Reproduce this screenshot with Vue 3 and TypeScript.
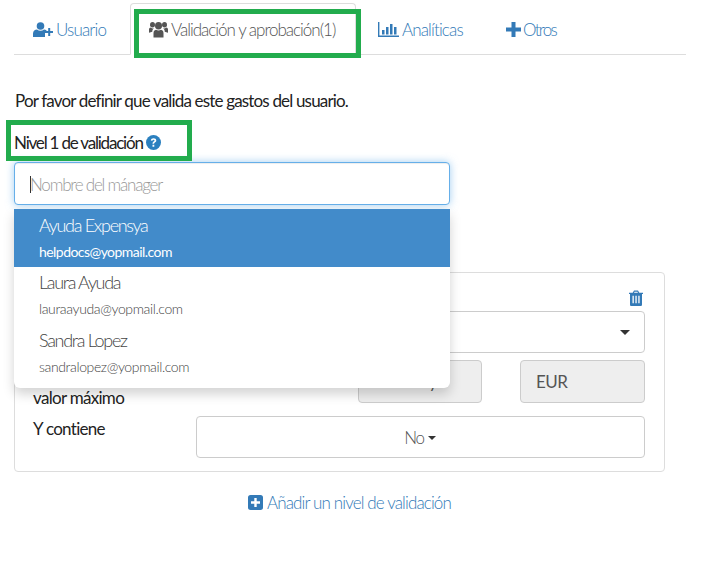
<script setup lang="ts">
const tabs = [
  { id: 'user', label: 'Usuario', active: false },
  { id: 'validation', label: 'Validación y aprobación(1)', active: true },
  { id: 'chart', label: 'Analíticas', active: false },
  { id: 'plus', label: 'Otros', active: false },
]
const people = [
  { name: 'Ayuda Expensya', mail: 'helpdocs@yopmail.com', active: true },
  { name: 'Laura Ayuda', mail: 'lauraayuda@yopmail.com', active: false },
  { name: 'Sandra Lopez', mail: 'sandralopez@yopmail.com', active: false },
]
</script>

<template>
  <div class="page">
    <ul class="tabs">
      <li v-for="t in tabs" :key="t.id" class="tab" :class="[t.id, { active: t.active }]">
        <svg v-if="t.id === 'user'" class="ico" width="20" height="15" viewBox="0 0 20 15">
          <circle cx="7.500" cy="4" r="3.800" fill="currentColor" />
          <path d="M0 15v-3.500C0 9 2 7.600 4 7.600c1 .8 2.200 1.200 3.500 1.200s2.500-.4 3.500-1.200c1 0 2 .4 2.700 1.100V11H12v4z" fill="currentColor" />
          <path d="M15.200 6h2v3h3v2h-3v3h-2v-3h-3V9h3z" fill="currentColor" />
        </svg>
        <svg v-else-if="t.id === 'validation'" class="ico" width="19" height="17" viewBox="0 0 19 16" preserveAspectRatio="none">
          <circle cx="9.500" cy="4.500" r="3.500" fill="currentColor" />
          <circle cx="3.500" cy="3.500" r="2.500" fill="currentColor" />
          <circle cx="15.500" cy="3.500" r="2.500" fill="currentColor" />
          <path d="M4.500 15.500v-4c0-2 1-3 2.500-3.300 1.500 1 3.500 1 5 0 1.500.3 2.500 1.300 2.500 3.300v4z" fill="currentColor" />
          <path d="M0 11V8c0-1 .8-1.800 1.800-1.800 1 .8 2 1 3 .7-1 .8-1.500 1.800-1.500 3.100zM19 11V8c0-1-.8-1.800-1.800-1.800-1 .8-2 1-3 .7 1 .8 1.500 1.800 1.500 3.100z" fill="currentColor" />
        </svg>
        <svg v-else-if="t.id === 'chart'" class="ico" width="21" height="15" viewBox="0 0 21 15">
          <path d="M0 0h1.400v13.500H21V15H0z" fill="currentColor" />
          <path d="M4 8h2.500v4.500H4zM8 5h2.500v7.500H8zM12 2h2.500v10.500H12zM16 5h2.500v7.500H16z" fill="currentColor" />
        </svg>
        <svg v-else class="ico" width="15" height="15" viewBox="0 0 15 15">
          <path d="M5.500 0h4v5.500H15v4H9.500V15h-4V9.500H0v-4h5.500z" fill="currentColor" />
        </svg>
        <span>{{ t.label }}</span>
      </li>
    </ul>

    <p class="intro">Por favor definir que valida este gastos del usuario.</p>

    <div class="level-label">
      <span>Nivel 1 de validación</span>
      <svg width="15" height="15" viewBox="0 0 15 15">
        <circle cx="7.500" cy="7.500" r="7.500" fill="#2b80bf" />
        <path d="M4.800 5.600c.2-1.500 1.300-2.300 2.800-2.300s2.700.9 2.700 2.200c0 1-.6 1.500-1.300 2-.6.400-.9.700-.9 1.300H6.500c0-1.100.4-1.700 1.100-2.200.6-.4.900-.6.900-1 0-.5-.4-.8-1-.8s-1 .4-1.100 1zM6.500 9.800h1.800v1.900H6.500z" fill="#fff" />
      </svg>
    </div>

    <div class="picker">
      <div class="search"><i class="caret-bar"></i><span>Nombre del mánager</span></div>
      <ul class="menu">
        <li v-for="p in people" :key="p.mail" class="person" :class="{ on: p.active }">
          <div class="pname">{{ p.name }}</div>
          <div class="pmail">{{ p.mail }}</div>
        </li>
      </ul>
    </div>

    <section class="panel">
      <div class="trash-row">
        <svg width="14" height="16" viewBox="0 0 14 15" preserveAspectRatio="none">
          <path fill-rule="evenodd" d="M0 2.500h3.700L5 .5h4l1.300 2H14v1.300h-1v9.700c0 .9-.6 1.500-1.400 1.500H2.400C1.600 15 1 14.400 1 13.500V3.800H0zM5 2.500h4l-.6-.9H5.600zM3.500 5.500v7h1.300v-7zm2.900 0v7h1.300v-7zm2.900 0v7h1.300v-7z" fill="#337ab7" />
        </svg>
      </div>
      <div class="row first">
        <div class="label"></div>
        <div class="control select"><i class="caret big"></i></div>
      </div>
      <div class="row second">
        <div class="label bottom">valor máximo</div>
        <div class="pair">
          <div class="control readonly amount">y</div>
          <div class="control readonly eur">EUR</div>
        </div>
      </div>
      <div class="row third">
        <div class="label top">Y contiene</div>
        <div class="control centered"><span class="no">No</span><i class="caret"></i></div>
      </div>
    </section>

    <div class="add">
      <svg width="15" height="15" viewBox="0 0 15 15">
        <path fill-rule="evenodd" d="M2.500 0h10A2.500 2.500 0 0 1 15 2.500v10a2.500 2.500 0 0 1-2.500 2.500h-10A2.500 2.500 0 0 1 0 12.500v-10A2.500 2.500 0 0 1 2.500 0zM6.300 3v3.300H3v2.400h3.300V12h2.400V8.700H12V6.300H8.700V3z" fill="#337ab7" />
      </svg>
      <span>Añadir un nivel de validación</span>
    </div>

    <div class="mark mark-tab"></div>
    <div class="mark mark-level"></div>
  </div>
</template>

<style>
html, body { margin: 0; background: #fff; }
</style>

<style scoped>
.page {
  position: relative;
  width: 710px;
  height: 562px;
  box-sizing: border-box;
  padding: 0 24px 0 14px;
  overflow: hidden;
  font-family: Lato, "Liberation Sans", sans-serif;
  font-size: 17px;
  letter-spacing: -0.55px;
  color: #333;
}
ul { list-style: none; margin: 0; padding: 0; }
.tabs {
  display: flex;
  height: 55px;
  box-sizing: border-box;
  border-bottom: 1px solid #ddd;
}
.tab {
  display: flex;
  align-items: center;
  gap: 3px;
  height: 55px;
  box-sizing: border-box;
  color: #337ab7;
  font-weight: 300;
  letter-spacing: -0.85px;
  padding-top: 4px;
  white-space: nowrap;
}
.tab.user { width: 116px; padding-left: 19px; }
.tab.validation {
  width: 226px;
  margin-top: 3px;
  height: 52px;
  padding: 0 0 0 18px;
  gap: 3px;
  color: #555;
  letter-spacing: -1px;
  border: 1px solid #ddd;
  border-bottom-color: #fff;
  border-radius: 4px 4px 0 0;
}
.tab.chart { width: 127px; padding-left: 22px; }
.tab.plus { padding-left: 23px; gap: 2px; letter-spacing: -1.7px; }
.ico { flex: none; }
.intro { margin: 36px 0 0 1px; line-height: 20px; height: 20px; color: #222; letter-spacing: -0.83px; }
.level-label {
  display: flex;
  align-items: center;
  gap: 3px;
  height: 20px;
  margin-top: 21px;
  color: #222;
  letter-spacing: -1.2px;
}
.picker { position: relative; margin-top: 10px; width: 436px; }
.search {
  box-sizing: border-box;
  height: 43px;
  display: flex;
  align-items: center;
  padding: 1px 0 0 15px;
  border: 1px solid #66afe9;
  border-radius: 4px;
  box-shadow: inset 0 1px 1px rgba(0,0,0,.075), 0 0 8px rgba(102,175,233,.6);
  color: #999;
  font-weight: 300;
  letter-spacing: -1.2px;
  background: #fff;
}
.caret-bar { width: 1px; height: 17px; background: #333; margin-right: -1px; }
.menu {
  position: absolute;
  z-index: 2;
  top: 47px;
  left: 0;
  width: 436px;
  height: 179px;
  background: #fff;
  border-radius: 0 0 6px 6px;
  box-shadow: 0 6px 12px rgba(0,0,0,.175);
}
.person { height: 58px; box-sizing: border-box; padding: 5px 25px 0; color: #444; }
.person.on { background: #428bca; color: #fff; }
.person + .person { padding-top: 4px; }
.pname { font-size: 18px; line-height: 22px; font-weight: 300; letter-spacing: -1.3px; }
.pmail { font-size: 14px; line-height: 18px; margin-top: 7px; letter-spacing: -0.38px; font-weight: 300; }
.person.on .pmail { font-weight: 400; letter-spacing: -0.55px; }
.panel {
  box-sizing: border-box;
  width: 651px;
  height: 200px;
  margin-top: 67px;
  padding: 17px 19px 0 18px;
  border: 1px solid #ddd;
  border-radius: 4px;
  display: flex;
  flex-direction: column;
}
.trash-row { display: flex; justify-content: flex-end; height: 21px; padding-right: 2px; }
.row { display: flex; }
.row.second { margin-top: 7px; }
.row.third { margin-top: 13px; }
.label { width: 163px; flex: none; color: #222; letter-spacing: -0.7px; }
.label.bottom { align-self: flex-end; line-height: 18px; margin-bottom: -4px; }
.label.top { line-height: 20px; margin-top: 3px; }
.control {
  box-sizing: border-box;
  flex: 1;
  height: 42px;
  border: 1px solid #ccc;
  border-radius: 4px;
  background: #fff;
  display: flex;
  align-items: center;
  color: #555;
}
.select { justify-content: flex-end; padding-right: 14px; }
.pair { flex: 1; display: flex; justify-content: flex-end; gap: 38px; }
.readonly { flex: none; width: 125px; height: 43px; background: #eee; }
.amount { width: 124px; justify-content: flex-end; padding-right: 44px; }
.eur { padding-left: 15px; letter-spacing: -0.5px; font-weight: 400; }
.centered { justify-content: center; gap: 4px; padding-right: 1px; }
.no { color: #555; font-weight: 300; letter-spacing: -1.300px; }
.caret {
  width: 0; height: 0;
  border-left: 4.500px solid transparent;
  border-right: 4.500px solid transparent;
  border-top: 4px solid #333;
  margin-top: 2px;
}
.caret.big { border-left-width: 5px; border-right-width: 5px; border-top-width: 5px; margin-top: 0; }
.add {
  display: flex;
  justify-content: center;
  align-items: center;
  gap: 4px;
  width: 671px;
  margin-top: 20px;
  height: 20px;
  color: #337ab7;
  font-weight: 300;
  letter-spacing: -0.86px;
}
.mark { position: absolute; box-sizing: border-box; border: 5px solid #22ac4d; pointer-events: none; }
.mark-tab { left: 134px; top: 9px; width: 227px; height: 49px; }
.mark-level { left: 6px; top: 120px; width: 186px; height: 41px; }
</style>
